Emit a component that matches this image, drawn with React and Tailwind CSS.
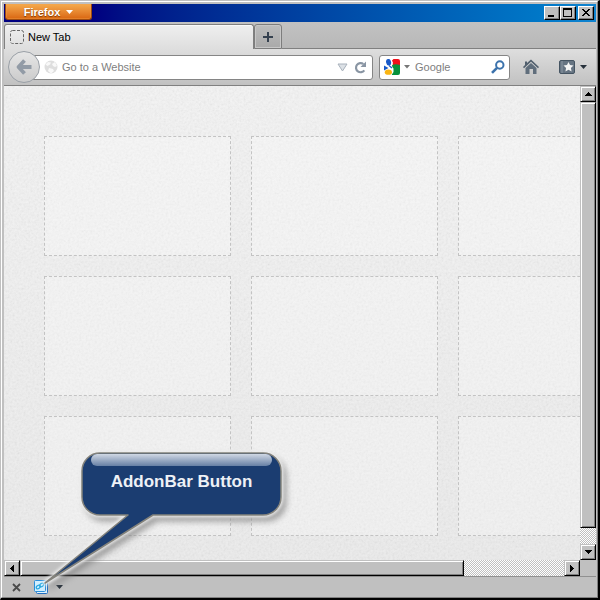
import React from 'react';

const RAISED =
  'shrink-0 flex items-center justify-center bg-[#c0c0c0] border border-t-[#c0c0c0] border-l-[#c0c0c0] border-b-black border-r-black shadow-[inset_1px_1px_0_#fff,inset_-1px_-1px_0_#808080]';
const CAPTION =
  'flex h-[14px] w-4 items-center justify-center bg-[#c0c0c0] border border-t-white border-l-white border-b-black border-r-black shadow-[inset_-1px_-1px_0_#808080]';
const TRACK =
  'bg-[repeating-conic-gradient(#c0c0c0_0_25%,#fff_0_50%)] bg-[length:2px_2px]';

function Arrow({ d, label }) {
  return (
    <button type="button" aria-label={label} className={`${RAISED} size-4`}>
      <svg width="14" height="14" shapeRendering="crispEdges" aria-hidden="true">
        <path d={d} fill="#000" />
      </svg>
    </button>
  );
}

function TitleBar() {
  return (
    <header className="flex h-[18px] shrink-0 items-start justify-between bg-linear-to-r from-[#000080] from-15% to-[#1084d0] pl-px pr-[2px]">
      <button
        type="button"
        className="flex h-4 w-[87px] items-center justify-center gap-[6px] rounded-b-[3px] border border-t-0 border-[#9c4a10] bg-linear-to-b from-[#f5ab4c] to-[#d9660d] text-[11px] leading-[14px] font-bold text-white shadow-[inset_0_0_0_1px_#f0a04d66] [text-shadow:0_1px_1px_#7a3500]"
      >
        Firefox
        <svg width="7" height="4" aria-hidden="true">
          <path d="M0 0h7L3.500 4z" fill="#fff" />
        </svg>
      </button>
      <div className="flex pt-[2px]">
        <button type="button" aria-label="Minimize" className={CAPTION}>
          <svg width="14" height="12" shapeRendering="crispEdges"><path d="M3 8h6v2H3z" /></svg>
        </button>
        <button type="button" aria-label="Maximize" className={CAPTION}>
          <svg width="14" height="12" shapeRendering="crispEdges">
            <path d="M2 1h9v9H2zM3 3v6h7V3z" fillRule="evenodd" />
          </svg>
        </button>
        <button type="button" aria-label="Close" className={`${CAPTION} ml-[2px]`}>
          <svg width="14" height="12" shapeRendering="crispEdges">
            <path d="M3 2h2v1h1v1h2V3h1V2h2v1h-1v1H9v1H8v1h1v1h1v1h1v1H9V8H8V7H6v1H5v1H3V8h1V7h1V6h1V5H5V4H4V3H3z" />
          </svg>
        </button>
      </div>
    </header>
  );
}

function TabStrip() {
  return (
    <div className="flex h-[27px] shrink-0 bg-linear-to-b from-[#c2c2c2] to-[#b7b7b7] pt-[2px]">
      <div className="flex w-[250px] items-center gap-1 rounded-t-[3px] border border-b-0 border-[#808080] bg-linear-to-b from-[#efefef] to-[#dedede] pl-[5px] text-[11px] shadow-[inset_0_1px_0_#fafafa]">
        <svg width="14" height="14" fill="none" stroke="#666" strokeDasharray="3 1.500" aria-hidden="true">
          <rect x=".5" y=".5" width="13" height="13" rx="2" />
        </svg>
        <span>New Tab</span>
      </div>
      <button
        type="button"
        aria-label="Open a new tab"
        className="flex w-[28px] items-center justify-center rounded-t-[3px] border border-[#7d7d7d] bg-linear-to-b from-[#bdbdbd] to-[#a9a9a9] shadow-[inset_0_0_0_1px_#c7c7c7]"
      >
        <svg width="12" height="12" shapeRendering="crispEdges"><path d="M5 1h2v4h4v2H7v4H5V7H1V5h4z" fill="#35414f" /></svg>
      </button>
      <div className="flex-1 border-b border-[#808080]" />
    </div>
  );
}

function Toolbar() {
  return (
    <nav className="flex h-[37px] shrink-0 items-center border-b border-[#808080] bg-linear-to-b from-[#dedede] to-[#c1c1c1] pl-[4px] pr-[9px]">
      <button
        type="button"
        aria-label="Back"
        className="z-10 flex size-8 shrink-0 items-center justify-center rounded-full border border-[#9aa0a7] bg-linear-to-b from-[#e6e6e6] to-[#cbcbcb]"
      >
        <svg width="18" height="18" viewBox="0 0 18 18" fill="none" stroke="#929ba6" strokeWidth="3.800" aria-hidden="true">
          <path d="M9.500 2.500 3.500 9l6 6.500M4 9h12.500" strokeLinejoin="round" />
        </svg>
      </button>
      <div className="-ml-4 flex h-[25px] min-w-0 flex-1 items-center rounded-[3px] border border-[#858585] bg-white pl-[19px] pr-[5px]">
        <svg width="14" height="14" viewBox="0 0 14 14" className="shrink-0" aria-hidden="true">
          <circle cx="7" cy="7" r="6.500" fill="#dedede" />
          <path d="M1.500 4.500 4 2l3 .5-1 2L3.500 6zM8 4l3-2 2 4-2 1-2-1zM5 8l4 1 1 2-3 2.500L4 11z" fill="#f8f8f8" />
        </svg>
        <input
          type="text"
          aria-label="Address"
          placeholder="Go to a Website"
          className="ml-1 min-w-0 flex-1 bg-transparent text-[11px] outline-none placeholder:text-[#808080]"
        />
        <button type="button" aria-label="Show history" className="shrink-0">
          <svg width="11" height="9" className="block"><path d="M1 1h9L5.500 8z" fill="#dce1e6" stroke="#a9b2bc" /></svg>
        </button>
        <button type="button" aria-label="Reload" className="ml-[6px] shrink-0">
          <svg width="13" height="13" viewBox="0 0 13 13" className="block" fill="none">
            <path d="M10.300 9.400A4.600 4.600 0 1 1 9.400 3" stroke="#8995a3" strokeWidth="2.200" />
            <path d="M12 .5V6H6.500z" fill="#8995a3" />
          </svg>
        </button>
      </div>
      <div className="ml-[6px] flex h-[25px] w-[131px] shrink-0 items-center rounded-[3px] border border-[#858585] bg-white px-1">
        <button type="button" aria-label="Search engine" className="flex shrink-0 items-center gap-1">
          <svg width="16" height="16" viewBox="0 0 16 16" aria-hidden="true">
            <path d="M7.500 0H14a2 2 0 0 1 2 2v4.500H9z" fill="#f0101a" />
            <path d="M8 6.200C10 5 13 5 16 6v8a2 2 0 0 1-2 2H7.500L9 12z" fill="#07913c" />
            <path d="M7 0h2.500L8 1.500 9 4 7 6.500l2.500 3V13l-2 3H6z" fill="#fff" />
            <ellipse cx="4.600" cy="3.200" rx="2.500" ry="3.300" transform="rotate(-12 4.600 3.200)" fill="#1859c8" />
            <path d="M0 6.500 4.500 9 0 11.500z" fill="#1859c8" />
            <path d="m5 6.500 3 2.500" stroke="#1859c8" strokeWidth="1.200" />
            <ellipse cx="4.400" cy="13.200" rx="3.600" ry="2.600" fill="#f9b412" />
          </svg>
          <svg width="6" height="4" className="block"><path d="M0 0h6L3 3.500z" fill="#777" /></svg>
        </button>
        <input
          type="search"
          aria-label="Search with Google"
          placeholder="Google"
          className="ml-[5px] min-w-0 flex-1 bg-transparent text-[11px] outline-none placeholder:text-[#808080]"
        />
        <button type="button" aria-label="Search" className="shrink-0">
          <svg width="14" height="14" viewBox="0 0 14 14" className="block" fill="none" stroke="#3b72ac">
            <circle cx="8.800" cy="5" r="3.700" strokeWidth="2" />
            <path d="m6 7.800-5 5" strokeWidth="2.600" />
          </svg>
        </button>
      </div>
      <button type="button" aria-label="Home" className="ml-[13px] shrink-0">
        <svg width="16" height="16" viewBox="0 0 16 16" className="block">
          <path d="M8 .5 16 8l-1 1.200-7-6.500-7 6.500L0 8l2-2V2.500h2V4z" fill="#52606e" />
          <path d="m8 4 5.500 5v6h-3.500v-5H6.500v5h-4V9z" fill="#606e7c" />
        </svg>
      </button>
      <button type="button" aria-label="Bookmarks" className="ml-5 flex shrink-0 items-center gap-[5px]">
        <svg width="16" height="14" viewBox="0 0 16 14" className="block">
          <rect x=".5" y=".5" width="15" height="13" rx="1.500" fill="#667482" stroke="#455462" />
          <path d="M3 1v12" stroke="#8b97a3" />
          <path d="m9.500 2 1.500 3.100 3.500.5-2.600 2.300.7 3.500-3.100-1.700-3.100 1.700.7-3.500-2.600-2.300 3.500-.5z" fill="#f4f4f4" />
        </svg>
        <svg width="7" height="4" className="block"><path d="M0 0h7L3.500 4z" fill="#27313b" /></svg>
      </button>
    </nav>
  );
}

function NewTabPage() {
  return (
    <main className="relative min-w-0 flex-1 overflow-hidden bg-linear-to-b from-[#f4f4f4] to-[#ececec] pt-[50px] pl-10">
      <svg className="absolute inset-0 size-full opacity-[0.08]" aria-hidden="true">
        <filter id="paper">
          <feTurbulence type="fractalNoise" baseFrequency="0.45" numOctaves="2" />
          <feColorMatrix values="1.200 0 0 0 -.1 1.200 0 0 0 -.1 1.200 0 0 0 -.1 0 0 0 0 1" />
        </filter>
        <rect width="100%" height="100%" filter="url(#paper)" />
      </svg>
      <div className="relative grid grid-cols-[repeat(3,187px)] auto-rows-[120px] gap-5">
        {Array.from({ length: 9 }, (_, i) => (
          <div key={i} className="border border-dashed border-[#c3c3c3] bg-white/25" />
        ))}
      </div>
    </main>
  );
}

function Callout() {
  const outline =
    'M100 11H263a18 18 0 0 1 18 18V55a18 18 0 0 1-18 18H153L45 141 128 73H100a18 18 0 0 1-18-18V29a18 18 0 0 1 18-18z';
  return (
    <div className="pointer-events-none absolute -bottom-[2px] -left-px h-[158px] w-[300px]">
      <svg width="300" height="158" className="absolute inset-0" aria-hidden="true">
        <defs>
          <filter id="soft" x="-10%" y="-10%" width="125%" height="125%">
            <feGaussianBlur stdDeviation="3" />
          </filter>
          <filter id="glow" x="-10%" y="-10%" width="125%" height="125%">
            <feGaussianBlur stdDeviation="1.500" />
          </filter>
          <linearGradient id="gloss" x2="0" y2="1">
            <stop stopColor="#d0d8e4" />
            <stop offset="1" stopColor="#6780a5" />
          </linearGradient>
        </defs>
        <path d={outline} transform="translate(4 5)" fill="#777" stroke="#777" strokeWidth="3" opacity=".65" filter="url(#soft)" />
        <path d={outline} fill="#eee" stroke="#eee" strokeWidth="5" strokeLinejoin="round" opacity=".9" filter="url(#glow)" />
        <path d={outline} fill="#1b3d71" stroke="#83827b" strokeWidth="1.500" strokeLinejoin="round" />
        <rect x="91" y="12" width="181" height="12" rx="6" fill="url(#gloss)" />
      </svg>
      <p className="relative ml-[82px] mt-[29px] w-[199px] text-center text-[17px] leading-[22px] font-bold text-[#eef1f6]">
        AddonBar Button
      </p>
    </div>
  );
}

export default function App() {
  return (
    <div className="relative flex h-screen flex-col overflow-hidden border-t border-l border-r-2 border-b-2 border-t-[#c0c0c0] border-l-[#c0c0c0] border-r-black border-b-black bg-[#c0c0c0] font-['Liberation_Sans',Arial,sans-serif]">
      <div className="flex min-h-0 flex-1 flex-col border-t border-l border-r border-b border-t-white border-l-white border-r-[#808080] border-b-[#808080] pt-[2px] pr-px pl-[2px]">
        <TitleBar />
        <TabStrip />
        <Toolbar />
        <div className="flex min-h-0 flex-1">
          <NewTabPage />
          <div className={`flex w-4 shrink-0 flex-col ${TRACK}`}>
            <Arrow label="Scroll up" d="M7 5h1v1h1v1h1v1h1v1H4V8h1V7h1V6h1z" />
            <div className={`${RAISED} mb-4 min-h-0 flex-1 basis-0`} />
            <Arrow label="Scroll down" d="M4 5h7v1h-1v1H9v1H8v1H7V8H6V7H5V6H4z" />
          </div>
        </div>
        <div className="flex h-4 shrink-0">
          <div className={`flex flex-1 ${TRACK}`}>
            <Arrow label="Scroll left" d="M5 7h1V6h1V5h1V4h1v7H8v-1H7V9H6V8H5z" />
            <div className={`${RAISED} mr-[100px] flex-1`} />
            <Arrow label="Scroll right" d="M5 4h1v1h1v1h1v1h1v1H8v1H7v1H6v1H5z" />
          </div>
          <div className="w-4" />
        </div>
        <footer className="flex h-[21px] shrink-0 items-center border-t border-[#909090] pl-2">
          <button type="button" aria-label="Close add-on bar">
            <svg width="9" height="9" className="block" stroke="#4b4b4b" strokeWidth="1.800"><path d="m1 1 7 7m0-7-7 7" /></svg>
          </button>
          <button type="button" aria-label="AddonBar Button" className="ml-[13px]">
            <svg width="14" height="14" viewBox="0 0 14 14" className="block">
              <rect x="2.500" y="2.500" width="11" height="11" rx="1" fill="#dff3ff" stroke="#236fc0" />
              <rect x=".5" y=".5" width="11" height="11" rx="1" fill="#d2efff" stroke="#2b8fdb" />
              <g fill="none" stroke="#28a9e0" strokeWidth="1.300">
                <ellipse cx="4.300" cy="7" rx="2.200" ry="1.600" transform="rotate(-35 4.300 7)" />
                <ellipse cx="7.700" cy="5" rx="2.200" ry="1.600" transform="rotate(-35 7.700 5)" />
              </g>
            </svg>
          </button>
          <button type="button" aria-label="Add-on menu" className="ml-2">
            <svg width="7" height="4" className="block"><path d="M0 0h7L3.500 4z" fill="#27313b" /></svg>
          </button>
        </footer>
      </div>
      <Callout />
    </div>
  );
}
